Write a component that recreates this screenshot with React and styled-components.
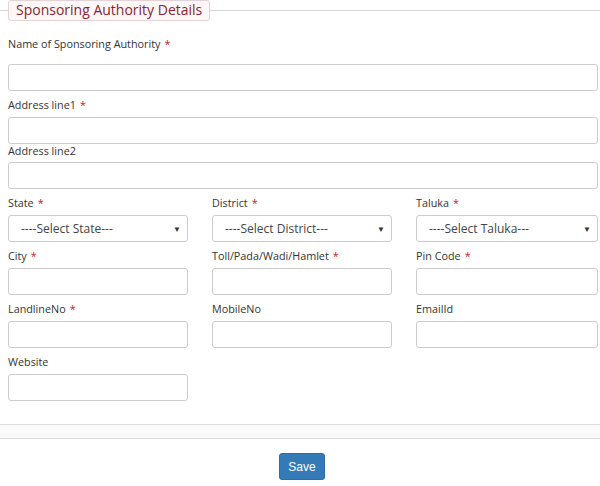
import React from 'react';
import styled, { createGlobalStyle } from 'styled-components';

const Global = createGlobalStyle`
  body { margin: 0; background: #fff; font-family: "Open Sans", "Liberation Sans", sans-serif; }
`;

const Page = styled.div`
  width: 600px;
  height: 486px;
  overflow: hidden;
`;

const Fieldset = styled.fieldset`
  margin: 0;
  padding: 0 2px 0 8px;
  border: none;
  border-top: 1px solid #d8d8d8;
  min-width: 0;
`;

const Legend = styled.legend`
  margin-left: 0;
  padding: 1px 7px 2px;
  border: 1px solid #e3d3d6;
  border-radius: 3px;
  background: #fdf7f8;
  color: #8b2332;
  font-size: 14px;
  line-height: 16px;
`;

const Field = styled.div`
  margin-top: ${p => p.$top ?? 7}px;
`;

const Label = styled.label`
  display: block;
  font-size: 10.8px;
  line-height: 14px;
  color: #333;
  margin-bottom: ${p => p.$gap || 5}px;
`;

const Req = styled.span`
  color: #c0232b;
  margin-left: 4px;
`;

const Input = styled.input`
  display: block;
  box-sizing: border-box;
  width: 100%;
  height: 27px;
  border: 1px solid #ccc;
  border-radius: 3px;
  background: #fff;
  margin: 0;
`;

const SelectBox = styled.div`
  box-sizing: border-box;
  height: 27px;
  border: 1px solid #ccc;
  border-radius: 3px;
  display: flex;
  align-items: center;
  justify-content: space-between;
  padding: 0 6px 0 12px;
  font-size: 12px;
  color: #444;
`;

const Caret = styled.span`
  font-size: 8px;
  color: #333;
`;

const Grid = styled.div`
  display: grid;
  grid-template-columns: 180px 180px 182px;
  column-gap: 24px;
`;

const Footer = styled.div`
  margin-top: 23px;
  height: 13px;
  border-top: 1px solid #ddd;
  border-bottom: 1px solid #ddd;
  background: #fbfafb;
`;

const Actions = styled.div`
  display: flex;
  justify-content: center;
  padding-top: 14px;
  padding-left: 4px;
`;

const Button = styled.button`
  width: 46px;
  height: 27px;
  background: #337ab7;
  border: 1px solid #2e6da4;
  border-radius: 3px;
  color: #fff;
  font-family: "Liberation Sans", sans-serif;
  font-size: 12px;
`;

const F = ({ label, req, select, top, gap }) => (
  <Field $top={top}>
    <Label $gap={gap}>{label}{req && <Req>*</Req>}</Label>
    {select ? <SelectBox>{select}<Caret>▼</Caret></SelectBox> : <Input />}
  </Field>
);

export default function App() {
  return (
    <Page>
      <Global />
      <Fieldset>
        <Legend>Sponsoring Authority Details</Legend>
        <F label="Name of Sponsoring Authority" req top={16} gap={13} />
        <F label="Address line1" req />
        <F label="Address line2" top={0} gap={4} />
        <Grid>
          <F label="State" req top={7} select="----Select State---" />
          <F label="District" req top={7} select="----Select District---" />
          <F label="Taluka" req top={7} select="----Select Taluka---" />
          <F label="City" req />
          <F label="Toll/Pada/Wadi/Hamlet" req />
          <F label="Pin Code" req />
          <F label="LandlineNo" req top={7} />
          <F label="MobileNo" top={7} />
          <F label="EmailId" top={7} />
          <F label="Website" top={7} />
        </Grid>
      </Fieldset>
      <Footer />
      <Actions><Button>Save</Button></Actions>
    </Page>
  );
}
